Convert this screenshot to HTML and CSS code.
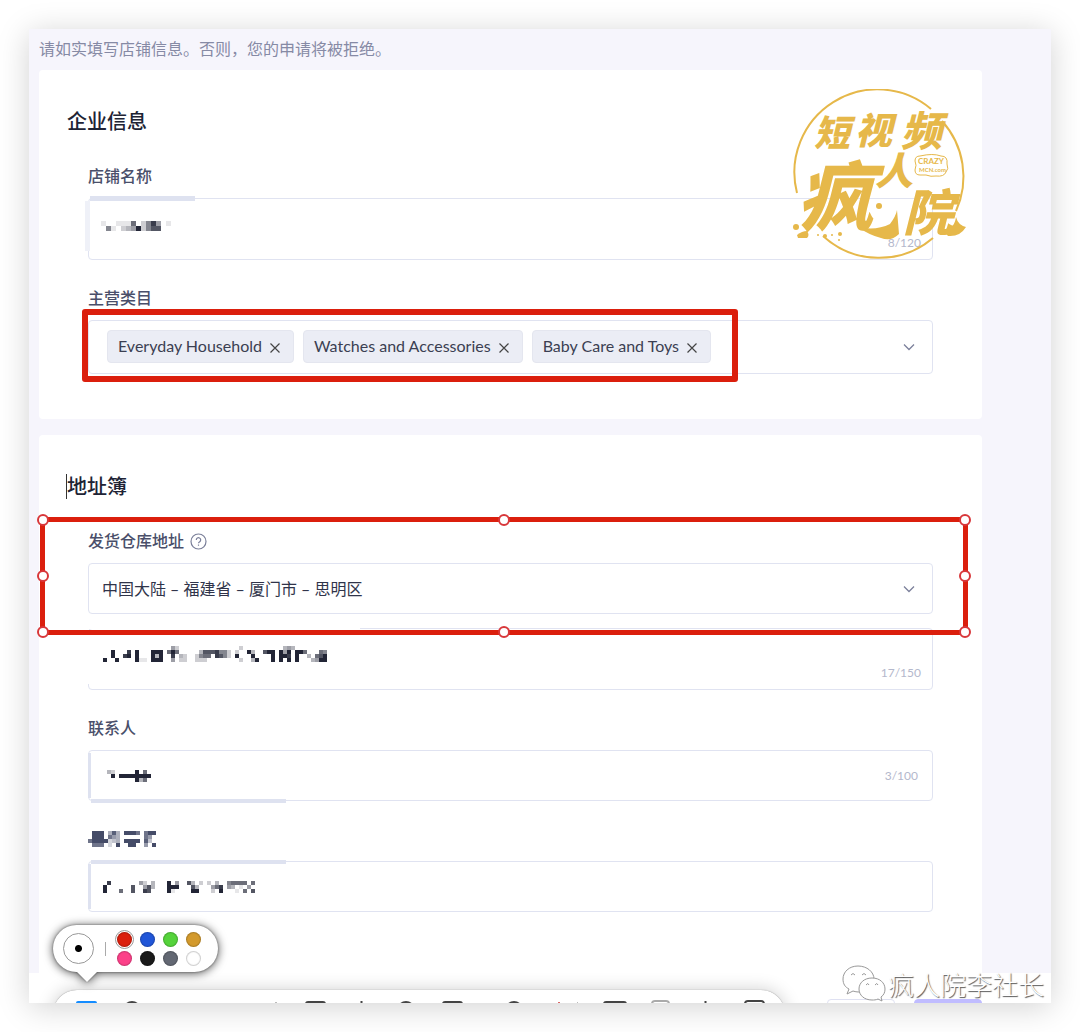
FILE: index.html
```html
<!DOCTYPE html>
<html lang="zh-CN">
<head>
    <meta charset="UTF-8">
    <meta name="viewport" content="width=device-width, initial-scale=1.0">
    <title>店铺信息</title>
    <link rel="stylesheet" href="styles.css">
</head>
<body>
    <main class="window">
        <p class="notice">请如实填写店铺信息。否则，您的申请将被拒绝。</p>

        <section class="card">
            <h2>企业信息</h2>
            <div class="fields">
                <div class="field">
                    <label for="shop-name">店铺名称</label>
                    <div class="control tall smudge-name">
                        <input type="text" id="shop-name">
                        <svg class="mosaic mosaic-name" data-cell="5" data-rows="1..1116.2584.1|.51.23492577"></svg>
                        <span class="counter">8/120</span>
                    </div>
                </div>
                <div class="field">
                    <span class="label" id="category-label">主营类目</span>
                    <div class="control tags" role="group" aria-labelledby="category-label">
                        <span class="tag">Everyday Household
                            <button type="button" aria-label="Everyday Household"><svg width="10" height="10" viewBox="0 0 10 10"><path d="M0.5 0.5L9.5 9.5M9.5 0.5L0.5 9.5"/></svg></button>
                        </span>
                        <span class="tag">Watches and Accessories
                            <button type="button" aria-label="Watches and Accessories"><svg width="10" height="10" viewBox="0 0 10 10"><path d="M0.5 0.5L9.5 9.5M9.5 0.5L0.5 9.5"/></svg></button>
                        </span>
                        <span class="tag">Baby Care and Toys
                            <button type="button" aria-label="Baby Care and Toys"><svg width="10" height="10" viewBox="0 0 10 10"><path d="M0.5 0.5L9.5 9.5M9.5 0.5L0.5 9.5"/></svg></button>
                        </span>
                        <svg class="chevron" width="12" height="8" viewBox="0 0 12 8"><path d="M1 1.5L6 6.5L11 1.5"/></svg>
                        <div class="marker marker-tags"></div>
                    </div>
                </div>
            </div>

            <svg class="logo" width="176" height="172" viewBox="0 0 176 172">
                <g class="ring">
                    <path d="M5 104A83 83 0 0 1 139 20"/>
                    <path d="M150 32A83 83 0 0 1 164 122"/>
                    <path d="M31 147A83 83 0 0 0 141 149"/>
                </g>
                <g class="brush">
                    <text x="22" y="57" font-size="36">短</text>
                    <text x="63" y="55" font-size="37">视</text>
                    <text x="109" y="57" font-size="41">频</text>
                    <text x="5" y="136" font-size="76">疯</text>
                    <text x="83" y="96" font-size="38">人</text>
                    <text x="111" y="142" font-size="50">院</text>
                </g>
                <g class="ink">
                    <circle cx="4" cy="138" r="3"/>
                    <path d="M5 146q5-4 10-4q3 4 0 7l-9 0z"/>
                    <circle cx="26" cy="146" r="1"/>
                    <circle cx="33" cy="147" r="2"/>
                    <circle cx="40" cy="146" r="1"/>
                    <circle cx="48" cy="145" r="2"/>
                    <circle cx="47" cy="151" r="1"/>
                    <circle cx="87" cy="117" r="3"/>
                    <path d="M66 138q18 4 32-3q6-8 7-14l2 24q-8 8-18 4q-12-3-23-11z"/>
                    <path d="M150 140q12 2 14-12q2 8 10 10q-6 10-18 9z"/>
                </g>
                <path class="bubble" d="M128 67q-5 0-5 5q2 4 0 9q0 5 5 5h6q5 2 10 1q8 1 10-4q3-3 1-8q1-8-6-8q-8-3-21 0z"/>
                <text class="badge-text" x="126" y="75" font-size="8">CRAZY</text>
                <text class="badge-text" x="127" y="83" font-size="6">MCN.com</text>
            </svg>
        </section>

        <section class="card card-last">
            <h2 class="with-caret">地址簿</h2>
            <div class="fields">
                <div class="field field-address">
                    <label for="warehouse">发货仓库地址
                        <svg class="help" width="17" height="17" viewBox="0 0 17 17"><circle cx="8.5" cy="8.5" r="7.5"/><path d="M6.3 6.9a2.2 2.2 0 1 1 3.4 1.8c-.8.5-1.2.8-1.2 1.6M8.5 11.6v1.2"/></svg>
                    </label>
                    <div class="control">
                        <select id="warehouse">
                            <option>中国大陆 – 福建省 – 厦门市 – 思明区</option>
                        </select>
                        <svg class="chevron" width="12" height="8" viewBox="0 0 12 8"><path d="M1 1.5L6 6.5L11 1.5"/></svg>
                    </div>
                    <div class="marker marker-address">
                        <i class="handle top left"></i>
                        <i class="handle top center"></i>
                        <i class="handle top right"></i>
                        <i class="handle middle left"></i>
                        <i class="handle middle right"></i>
                        <i class="handle bottom left"></i>
                        <i class="handle bottom center"></i>
                        <i class="handle bottom right"></i>
                    </div>
                </div>
                <div class="field">
                    <div class="control tall smudge-street">
                        <textarea aria-label="详细地址"></textarea>
                        <svg class="mosaic mosaic-street" data-cell="4" data-rows=".................42...............2..........343|..9...8.9...999.696.....37778552.2..93..799.949.996...65|..9..89.9...939..8.32..2566.8752.9...9....9.998.9..3.679|9..9....911.999..4.22..222........2..39...9.9.9.9...3499"></svg>
                        <span class="counter">17/150</span>
                    </div>
                </div>
                <div class="field">
                    <label for="contact">联系人</label>
                    <div class="control smudge-contact">
                        <input type="text" id="contact">
                        <svg class="mosaic mosaic-contact" data-cell="4" data-rows="32.....9.6.|.9.99999999|.......936.."></svg>
                        <span class="counter">3/100</span>
                    </div>
                </div>
                <div class="field">
                    <label for="phone" aria-label="联系电话"><svg class="mosaic-label" data-cell="4" data-rows=".999.484.9997.799|.999.754......75|79999234.9999.83.|.777.2.9..99..5.9"></svg></label>
                    <div class="control smudge-phone">
                        <input type="text" id="phone">
                        <svg class="mosaic mosaic-phone" data-cell="4" data-rows=".8.......42.3...9.4..73.2.2.3..56666.6|9......7..473...999...73...468.43.1.4.|9...6..7..87....91....99...2.9...1.6.7"></svg>
                    </div>
                </div>
            </div>
        </section>

        <footer class="actions">
            <button type="button" class="btn" aria-label="返回"></button>
            <button type="button" class="btn btn-primary" aria-label="提交"></button>
        </footer>

        <!-- annotation toolbar, cut off by the window edge -->
        <div class="toolbar">
            <svg width="732" height="13" viewBox="0 0 732 13">
                <rect x="23" y="11" width="21" height="6" rx="2" fill="#148cff"/>
                <g fill="none" stroke="#444" stroke-width="2">
                    <circle cx="79" cy="20" r="8"/>
                    <rect x="253" y="12" width="19" height="12" rx="2"/>
                    <path d="M308.500 11v4"/>
                    <circle cx="353" cy="20" r="8"/>
                    <rect x="390" y="12" width="19" height="12" rx="2"/>
                    <circle cx="461" cy="20" r="8"/>
                    <rect x="551" y="12" width="22" height="12" rx="2"/>
                    <path d="M652.500 11v4"/>
                    <rect x="692" y="11" width="19" height="12" rx="3"/>
                    <rect x="599" y="11" width="17" height="12" rx="3" stroke="#aaa"/>
                </g>
                <path d="M505 12h2v2h-2z" fill="#d66"/>
                <path d="M524 12h1v2h-1zM222 12h2v1h-2z" fill="#bbb"/>
            </svg>
        </div>
        <div class="palette">
            <button type="button" class="pen" aria-label="画笔粗细"></button>
            <span class="divider"></span>
            <div class="swatches">
                <button type="button" class="red selected" aria-label="红色"></button>
                <button type="button" class="blue" aria-label="蓝色"></button>
                <button type="button" class="green" aria-label="绿色"></button>
                <button type="button" class="gold" aria-label="金色"></button>
                <button type="button" class="pink" aria-label="粉色"></button>
                <button type="button" class="black" aria-label="黑色"></button>
                <button type="button" class="gray" aria-label="灰色"></button>
                <button type="button" class="white" aria-label="白色"></button>
            </div>
        </div>

        <div class="signature">
            <svg width="44" height="38" viewBox="0 0 44 38">
                <path d="M16 1C7 1 1 7 1 14c0 5 2 8 6 10l-2 5 6-3c3 1 5 1 8 1 6 0 13-5 13-13C32 7 25 1 16 1z"/>
                <path d="M30 13c-8 0-13 5-13 11s5 11 13 11c2 0 4 0 6-1l4 2-1-4c3-2 4-5 4-8 0-6-5-11-13-11z"/>
                <path d="M9 10q2-3 4 0M20 10q2-3 4 0M24 20q2-3 3 0M33 20q2-3 3 0"/>
            </svg>
            <span>疯人院李社长</span>
        </div>
    </main>

    <script src="script.js"></script>
</body>
</html>
```

FILE: styles.css
```css
* {
    box-sizing: border-box;
}
body {
    margin: 0;
    padding: 29px;
    background: #fff;
    font-family: Lato, "Noto Sans CJK SC", sans-serif;
    font-size: 16px;
    line-height: 24px;
    color: #30344a;
}
button, input, select, textarea {
    font: inherit;
    color: inherit;
}
.window {
    position: relative;
    overflow: hidden;
    padding-top: 8px;
    background: #f6f5fc;
    box-shadow: 0 4px 30px rgba(0, 0, 0, 0.18);
}
.notice {
    margin: 0 10px 9px;
    color: #868aa5;
}
.card {
    position: relative;
    margin: 0 69px 16px 10px;
    padding: 37px 28px 19px;
    background: #fff;
    border-radius: 4px;
}
.card-last {
    margin-bottom: 0;
    padding-bottom: 35px;
    border-radius: 4px 4px 0 0;
}
h2 {
    margin: 0 0 29px;
    font-size: 20px;
    line-height: 28px;
    font-weight: 500;
    color: #202334;
}
.with-caret {
    position: relative;
}
.with-caret::before {
    content: "";
    position: absolute;
    left: -1px;
    top: 2px;
    width: 1px;
    height: 25px;
    background: #333;
}
.fields {
    padding: 0 21px;
}
.field {
    position: relative;
    margin-bottom: 26px;
}
.field-address {
    margin-bottom: 14px;
}
label, .label {
    display: flex;
    align-items: center;
    gap: 6px;
    height: 24px;
    margin-bottom: 10px;
    font-weight: 500;
    color: #4a4f6a;
}
.help {
    fill: none;
    stroke: #7a7f99;
    stroke-width: 1.2;
}
.control {
    position: relative;
    display: flex;
    height: 51px;
    border: 1px solid #e0e3f1;
    border-radius: 4px;
    background: #fff;
}
.tall {
    height: 62px;
}
.control input,
.control select,
.control textarea {
    width: 100%;
    padding: 0 13px;
    border: 0;
    outline: 0;
    background: transparent;
    appearance: none;
    resize: none;
}
.counter {
    position: absolute;
    right: 11px;
    bottom: 4px;
    font-size: 12px;
    color: #b4b8cc;
}
.smudge-contact .counter {
    right: 14px;
    bottom: 12px;
}
.chevron {
    position: absolute;
    right: 17px;
    top: 50%;
    fill: none;
    stroke: #7c809b;
    stroke-width: 1.3;
    translate: 0 -50%;
}

/* tags */
.tags {
    align-items: center;
    gap: 9px;
    height: 54px;
    padding: 0 18px 1px;
}
.tag {
    display: flex;
    align-items: center;
    gap: 8px;
    height: 33px;
    padding: 0 13px 2px 10px;
    border: 1px solid #e4e6ef;
    border-radius: 4px;
    background: #ebedf5;
    color: #3b3f52;
    white-space: nowrap;
}
.tag button {
    display: flex;
    padding: 4px 0 0;
    border: 0;
    background: none;
}
.tag svg {
    stroke: #444;
    stroke-width: 1.2;
}

/* pixelated values */
.mosaic {
    position: absolute;
    left: 14px;
    fill: #222536;
}
.mosaic-name {
    left: 12px;
    top: 22px;
}
.mosaic-street {
    top: 17px;
}
.mosaic-contact {
    left: 18px;
    top: 19px;
}
.mosaic-phone {
    top: 19px;
}
.mosaic-label {
    fill: #454c68;
}
.control::before,
.control::after {
    position: absolute;
    background: #dee2f0;
}
.smudge-name::before {
    content: "";
    left: 1px;
    top: -3px;
    width: 105px;
    height: 5px;
}
.smudge-name::after {
    content: "";
    left: -4px;
    top: 2px;
    width: 5px;
    height: 50px;
    background: #eff1f8;
}
.smudge-street::before {
    content: "";
    left: -1px;
    top: -1px;
    width: 272px;
    height: 1px;
    background: #fff;
}
.smudge-street::after {
    content: "";
    left: -1px;
    top: -1px;
    width: 1px;
    height: 56px;
    background: #fff;
}
.smudge-contact::before,
.smudge-phone::before {
    content: "";
    left: 2px;
    width: 195px;
    height: 4px;
}
.smudge-contact::before {
    bottom: -3px;
}
.smudge-phone::before {
    top: -2px;
}
.smudge-contact::after,
.smudge-phone::after {
    content: "";
    left: -1px;
    top: 2px;
    bottom: 2px;
    width: 3px;
}

/* red markers */
.marker {
    position: absolute;
    z-index: 1;
    border: 6px solid #db1f0d;
    border-radius: 3px;
    pointer-events: none;
}
.marker-tags {
    left: -7px;
    right: 194px;
    top: -12px;
    bottom: -9px;
}
.marker-address {
    left: -48px;
    right: -35px;
    top: -12px;
    bottom: -21px;
    border-width: 5px;
}
.handle {
    position: absolute;
    width: 12px;
    height: 12px;
    margin: -6px;
    border: 2px solid #d8373a;
    border-radius: 50%;
    background: #fff;
}
.handle.top { top: -2px; }
.handle.middle { top: 50%; }
.handle.bottom { top: calc(100% + 2px); }
.handle.left { left: -2px; }
.handle.center { left: 50%; }
.handle.right { left: calc(100% + 2px); }

/* gold logo */
.logo {
    position: absolute;
    right: 14px;
    top: 19px;
    fill: #e6b84a;
}
.ring, .bubble {
    fill: none;
    stroke: #e6b84a;
    stroke-width: 2;
}
.bubble {
    stroke-width: 1;
}
.brush {
    font-family: "Noto Sans CJK SC", sans-serif;
    font-weight: 900;
    font-style: italic;
}
.badge-text {
    font-family: Lato, sans-serif;
    font-weight: 700;
}

.actions {
    display: flex;
    justify-content: flex-end;
    gap: 19px;
    height: 30px;
    padding: 26px 69px 0 0;
    overflow: hidden;
    background: #fff;
}
.btn {
    width: 68px;
    height: 32px;
    border: 1px solid #dfe1f2;
    border-radius: 4px;
    background: #fff;
}
.btn-primary {
    border-color: #c0bcff;
    background: #c0bcff;
}

.toolbar {
    position: absolute;
    left: 24px;
    bottom: -35px;
    height: 48px;
    overflow: hidden;
    border-radius: 24px;
    background: #fff;
    box-shadow: 0 0 1px rgba(0, 0, 0, 0.5), 0 0 18px rgba(0, 0, 0, 0.2);
}
.toolbar svg {
    display: block;
}
.palette {
    position: absolute;
    left: 24px;
    bottom: 31px;
    display: flex;
    align-items: center;
    gap: 11px;
    height: 47px;
    padding: 0 17px 0 10px;
    border-radius: 24px;
    background: #fff;
    filter: drop-shadow(0 0 1px rgba(0, 0, 0, 0.4)) drop-shadow(0 1px 5px rgba(0, 0, 0, 0.7));
}
.palette::after {
    content: "";
    position: absolute;
    left: 24px;
    top: 100%;
    border: 10px solid transparent;
    border-top-color: #fff;
    border-bottom: 0;
}
.pen {
    width: 31px;
    height: 31px;
    padding: 0;
    border: 1px solid #999;
    border-radius: 50%;
    background: radial-gradient(circle, #000 3px, transparent 4px);
}
.divider {
    width: 1px;
    height: 14px;
    background: #aaa;
}
.swatches {
    display: grid;
    grid-template-columns: repeat(4, 15px);
    gap: 4px 8px;
}
.swatches button {
    width: 15px;
    height: 15px;
    padding: 0;
    border: 0;
    border-radius: 50%;
    box-shadow: inset 0 0 1px 1px rgba(0, 0, 0, 0.2);
}
.swatches .selected {
    outline: 1px solid #999;
    outline-offset: 1px;
}
.red { background: #db1f0d; }
.blue { background: #2156d8; }
.green { background: #55d33b; }
.gold { background: #d39a2d; }
.pink { background: #fc4189; }
.black { background: #1a1a1a; }
.gray { background: #636873; }
.white { background: #fff; }

.signature {
    position: absolute;
    right: 7px;
    bottom: 0;
    display: flex;
    align-items: center;
    gap: 2px;
    font-family: "Noto Sans CJK SC", sans-serif;
    font-size: 26px;
    font-weight: 300;
    line-height: 36px;
    color: #fff;
    text-shadow: 1px 1px 1px #555;
}
.signature svg {
    fill: #fff;
    stroke: #999;
    stroke-width: 1;
}
```

FILE: script.js
```js
// each digit in data-rows is the darkness of one cell, a dot is an empty cell
document.querySelectorAll('svg[data-rows]').forEach(svg => {
    const cell = Number(svg.dataset.cell);
    const rows = svg.dataset.rows.split('|');
    const cols = Math.max(...rows.map(row => row.length));

    svg.setAttribute('width', cols * cell);
    svg.setAttribute('height', rows.length * cell);
    svg.innerHTML = rows.map((row, y) => [...row].map((level, x) => level === '.' ? '' :
        `<rect x="${x * cell}" y="${y * cell}" width="${cell}" height="${cell}" opacity="${level / 9}"/>`
    ).join('')).join('');
});
```
